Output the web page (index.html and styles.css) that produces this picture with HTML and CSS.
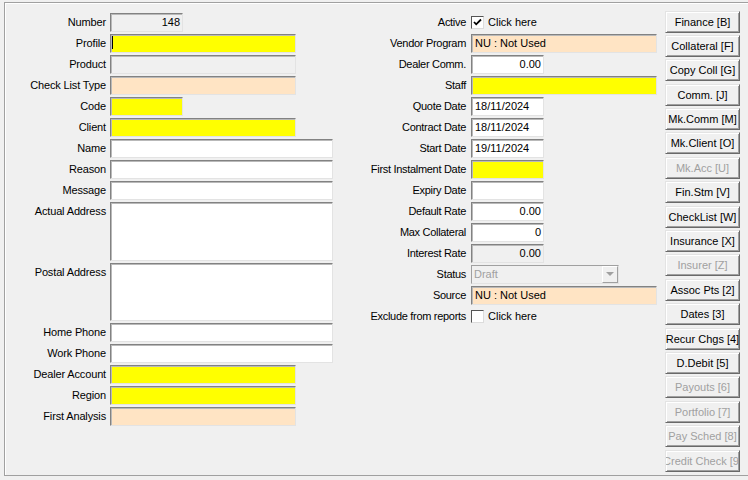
FILE: index.html
```html
<!DOCTYPE html>
<html>
<head>
<meta charset="utf-8">
<link rel="stylesheet" href="styles.css">
</head>
<body>
<div class="frame">
  <div class="col-left form">
    <label class="lbl">Number</label><div class="field ro w73 num">148</div>
    <label class="lbl">Profile</label><div class="field yellow w186 caret-field"><span class="caret"></span></div>
    <label class="lbl">Product</label><div class="field ro w186"></div>
    <label class="lbl">Check List Type</label><div class="field peach w186"></div>
    <label class="lbl">Code</label><div class="field yellow w73"></div>
    <label class="lbl">Client</label><div class="field yellow w186"></div>
    <label class="lbl">Name</label><div class="field w223"></div>
    <label class="lbl">Reason</label><div class="field w223"></div>
    <label class="lbl">Message</label><div class="field w223"></div>
    <label class="lbl">Actual Address</label><div class="field w223 memo1"></div>
    <label class="lbl">Postal Address</label><div class="field w223 memo2"></div>
    <label class="lbl">Home Phone</label><div class="field w223"></div>
    <label class="lbl">Work Phone</label><div class="field w223"></div>
    <label class="lbl">Dealer Account</label><div class="field yellow w186"></div>
    <label class="lbl">Region</label><div class="field yellow w186"></div>
    <label class="lbl">First Analysis</label><div class="field peach w186"></div>
  </div>

  <div class="col-mid form">
    <label class="lbl">Active</label>
    <div class="check"><span class="box"><svg width="11" height="11" viewBox="0 0 11 11"><polyline points="2,5 4.2,7.3 9,2.5" fill="none" stroke="#000" stroke-width="1.8"/></svg></span><span>Click here</span></div>
    <label class="lbl">Vendor Program</label><div class="field peach w186">NU : Not Used</div>
    <label class="lbl">Dealer Comm.</label><div class="field w73 num">0.00</div>
    <label class="lbl">Staff</label><div class="field yellow w186"></div>
    <label class="lbl">Quote Date</label><div class="field w73">18/11/2024</div>
    <label class="lbl">Contract Date</label><div class="field w73">18/11/2024</div>
    <label class="lbl">Start Date</label><div class="field w73">19/11/2024</div>
    <label class="lbl">First Instalment Date</label><div class="field yellow w73"></div>
    <label class="lbl">Expiry Date</label><div class="field w73"></div>
    <label class="lbl">Default Rate</label><div class="field w73 num">0.00</div>
    <label class="lbl">Max Collateral</label><div class="field w73 num">0</div>
    <label class="lbl">Interest Rate</label><div class="field ro w73 num">0.00</div>
    <label class="lbl">Status</label>
    <div class="combo"><span class="combo-text">Draft</span><span class="combo-btn"><span class="arrow"></span></span></div>
    <label class="lbl">Source</label><div class="field peach w186">NU : Not Used</div>
    <label class="lbl">Exclude from reports</label>
    <div class="check"><span class="box"></span><span>Click here</span></div>
  </div>

  <div class="buttons">
    <div class="btn">Finance [B]</div>
    <div class="btn">Collateral [F]</div>
    <div class="btn">Copy Coll [G]</div>
    <div class="btn">Comm. [J]</div>
    <div class="btn">Mk.Comm [M]</div>
    <div class="btn">Mk.Client [O]</div>
    <div class="btn dis">Mk.Acc [U]</div>
    <div class="btn">Fin.Stm [V]</div>
    <div class="btn">CheckList [W]</div>
    <div class="btn">Insurance [X]</div>
    <div class="btn dis">Insurer [Z]</div>
    <div class="btn">Assoc Pts [2]</div>
    <div class="btn">Dates [3]</div>
    <div class="btn">Recur Chgs [4]</div>
    <div class="btn">D.Debit [5]</div>
    <div class="btn dis">Payouts [6]</div>
    <div class="btn dis">Portfolio [7]</div>
    <div class="btn dis">Pay Sched [8]</div>
    <div class="btn dis">Credit Check [9]</div>
  </div>
</div>
</body>
</html>
```

FILE: styles.css
```css
html, body {
  margin: 0;
  padding: 0;
}
body {
  width: 748px;
  height: 480px;
  overflow: hidden;
  background: #f0f0f0;
  font-family: "Liberation Sans", Arial, sans-serif;
  font-size: 11px;
  color: #000;
}
.frame {
  box-sizing: border-box;
  margin: 2px 0 0 4px;
  width: 746px;
  height: 474px;
  border: 1px solid #a0a0a0;
  box-shadow: inset 1px 1px 0 #fff;
  display: flex;
  align-items: flex-start;
}
.form {
  display: grid;
  row-gap: 2px;
  align-items: start;
  padding-top: 9.5px;
}
.col-left {
  margin-left: 5px;
  grid-template-columns: 96px 223px;
  column-gap: 4px;
}
.col-mid {
  margin-left: 17px;
  grid-template-columns: 116px 186px;
  column-gap: 5px;
}
.lbl {
  text-align: right;
  line-height: 18px;
  height: 19px;
  white-space: nowrap;
  letter-spacing: -0.15px;
}
.col-mid .lbl {
  letter-spacing: -0.3px;
}
.field {
  box-sizing: border-box;
  height: 19px;
  line-height: 17px;
  padding: 0 2px 0 3px;
  background: #fff;
  border: 1px solid;
  border-color: #828282 #e3e3e3 #e3e3e3 #828282;
  box-shadow: inset 1px 1px 0 #b9b9b9;
  white-space: nowrap;
  overflow: hidden;
}
.w73 { width: 73px; }
.w186 { width: 186px; }
.w223 { width: 223px; }
.memo1 { height: 59px; }
.memo2 { height: 58px; }
.num { text-align: right; }
.yellow { background: #ffff00; }
.peach { background: #ffe4c4; }
.ro { background: #f0f0f0; }
.caret-field { padding-left: 1px; }
.caret {
  display: inline-block;
  width: 1px;
  height: 13px;
  background: #000;
  vertical-align: middle;
  margin-top: -2px;
}
.check {
  display: flex;
  align-items: center;
  height: 19px;
  gap: 4px;
}
.box {
  box-sizing: border-box;
  width: 13px;
  height: 13px;
  background: #fff;
  border: 1px solid;
  border-color: #555 #dcdcdc #dcdcdc #555;
  display: flex;
  align-items: center;
  justify-content: center;
  margin-top: 1px;
}
.box svg { display: block; }
.combo {
  box-sizing: border-box;
  width: 148px;
  height: 19px;
  border: 1px solid;
  border-color: #a0a0a0 #e3e3e3 #e3e3e3 #a0a0a0;
  background: #f0f0f0;
  display: flex;
  align-items: stretch;
}
.combo-text {
  flex: 1;
  color: #a0a0a0;
  line-height: 17px;
  padding-left: 2px;
}
.combo-btn {
  box-sizing: border-box;
  width: 16px;
  border: 1px solid;
  border-color: #fff #a0a0a0 #a0a0a0 #fff;
  display: flex;
  align-items: center;
  justify-content: center;
}
.arrow {
  width: 0;
  height: 0;
  border-left: 4px solid transparent;
  border-right: 4px solid transparent;
  border-top: 4px solid #a0a0a0;
}
.buttons {
  margin-left: 8px;
  padding-top: 7.5px;
  display: flex;
  flex-direction: column;
  gap: 2.4px;
}
.btn {
  box-sizing: border-box;
  width: 75px;
  height: 22px;
  border: 1px solid;
  border-color: #e3e3e3 #696969 #696969 #e3e3e3;
  box-shadow: inset 1px 1px 0 #fff, inset -1px -1px 0 #a0a0a0;
  background: #f0f0f0;
  display: flex;
  align-items: center;
  justify-content: center;
  white-space: nowrap;
  overflow: hidden;
}
.dis { color: #a0a0a0; }
```
